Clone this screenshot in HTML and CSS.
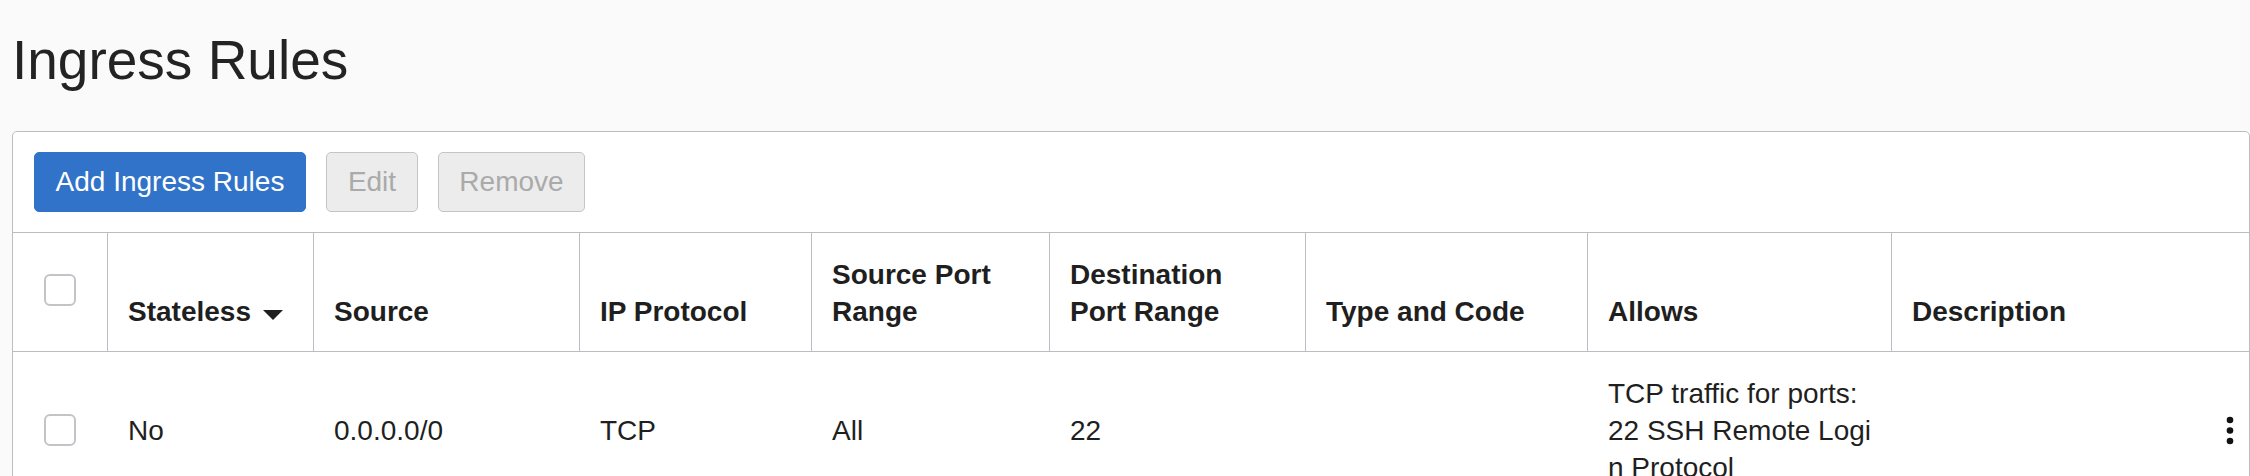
FILE: index.html
```html
<!DOCTYPE html>
<html lang="en">
<head>
<meta charset="utf-8">
<title>Ingress Rules</title>
<link rel="stylesheet" href="styles.css">
</head>
<body>
<div class="page">
  <h1 class="title">Ingress Rules</h1>
  <section class="panel">
    <div class="toolbar">
      <button class="btn btn-primary btn-add" type="button">Add Ingress Rules</button>
      <button class="btn btn-disabled btn-edit" type="button" disabled>Edit</button>
      <button class="btn btn-disabled btn-remove" type="button" disabled>Remove</button>
    </div>
    <table class="rules">
      <colgroup>
        <col class="col-check">
        <col class="col-stateless">
        <col class="col-source">
        <col class="col-proto">
        <col class="col-sport">
        <col class="col-dport">
        <col class="col-type">
        <col class="col-allows">
        <col class="col-desc">
        <col class="col-actions">
      </colgroup>
      <thead>
        <tr>
          <th class="th-check"><span class="checkbox"></span></th>
          <th class="th-sort">Stateless<svg class="sort-icon" width="20" height="10" viewBox="0 0 20 10" aria-hidden="true"><polygon points="0,0 20,0 10,10" fill="#1f1f1f"/></svg></th>
          <th>Source</th>
          <th>IP Protocol</th>
          <th>Source Port Range</th>
          <th>Destination Port Range</th>
          <th>Type and Code</th>
          <th>Allows</th>
          <th>Description</th>
          <th class="th-actions"></th>
        </tr>
      </thead>
      <tbody>
        <tr>
          <td class="td-check"><span class="checkbox"></span></td>
          <td>No</td>
          <td>0.0.0.0/0</td>
          <td>TCP</td>
          <td>All</td>
          <td>22</td>
          <td></td>
          <td class="td-allows">TCP traffic for ports: 22 SSH Remote Login Protocol</td>
          <td></td>
          <td class="td-actions"><svg class="kebab" width="8" height="30" viewBox="0 0 8 30" aria-hidden="true"><circle cx="4" cy="4" r="3.3" fill="#111"/><circle cx="4" cy="14.5" r="3.3" fill="#111"/><circle cx="4" cy="25" r="3.3" fill="#111"/></svg></td>
        </tr>
      </tbody>
    </table>
  </section>
</div>
</body>
</html>
```

FILE: styles.css
```css
* {
  box-sizing: border-box;
}

html, body {
  margin: 0;
  padding: 0;
  background: #fafafa;
  font-family: "Liberation Sans", Arial, "Helvetica Neue", sans-serif;
  color: #1f1f1f;
  overflow: hidden;
}

.page {
  padding: 28px 0 0 12px;
}

.title {
  margin: 0 0 39px 0;
  font-size: 55px;
  line-height: 64px;
  font-weight: 400;
  color: #232323;
}

.panel {
  background: #ffffff;
  border: 1px solid #babdc2;
  border-radius: 5px;
  width: 2238px;
}

.toolbar {
  display: flex;
  gap: 20px;
  padding: 20px 21px;
  border-bottom: 1px solid #babdc2;
}

.btn {
  height: 60px;
  padding: 0;
  font-family: inherit;
  font-size: 28px;
  border-radius: 5px;
  border: 1px solid transparent;
  cursor: pointer;
}

.btn-primary {
  background: #3073c8;
  border-color: #3073c8;
  color: #ffffff;
}

.btn-disabled {
  background: #ececec;
  border-color: #c3c5c8;
  color: #aaaaaa;
  cursor: default;
}

.btn-add { width: 272px; }
.btn-edit { width: 92px; }
.btn-remove { width: 147px; }

.rules {
  width: 2236px;
  table-layout: fixed;
  border-collapse: separate;
  border-spacing: 0;
  font-size: 28px;
  line-height: 37px;
}

.col-check { width: 94px; }
.col-stateless { width: 206px; }
.col-source { width: 266px; }
.col-proto { width: 232px; }
.col-sport { width: 238px; }
.col-dport { width: 256px; }
.col-type { width: 282px; }
.col-allows { width: 304px; }
.col-desc { width: 298px; }
.col-actions { width: 60px; }

.rules th {
  text-align: left;
  font-weight: 700;
  color: #1f1f1f;
  vertical-align: bottom;
  padding: 23px 20px 21px 20px;
  border-left: 1px solid #babdc2;
  border-bottom: 1px solid #babdc2;
}

.rules th.th-check {
  border-left: none;
  vertical-align: middle;
  padding: 0;
}

.rules th.th-actions {
  border-left: none;
}

.th-sort {
  white-space: nowrap;
}

.sort-icon {
  margin-left: 12px;
  vertical-align: 1px;
}

.rules td {
  padding: 23px 21px 19px 21px;
  vertical-align: middle;
  color: #1f1f1f;
}

.rules td.td-check {
  padding: 2px 0 0 0;
}

.rules td.td-allows {
  word-break: break-all;
  padding-right: 18px;
}

.rules td.td-actions {
  padding: 0 15px 0 0;
  text-align: right;
}

.kebab {
  display: inline-block;
  vertical-align: middle;
}

.checkbox {
  display: block;
  width: 32px;
  height: 32px;
  margin: 0 auto;
  border: 2px solid #c2c4c8;
  border-radius: 6px;
  background: #ffffff;
}

.th-check .checkbox {
  position: relative;
  top: -2px;
}
```
